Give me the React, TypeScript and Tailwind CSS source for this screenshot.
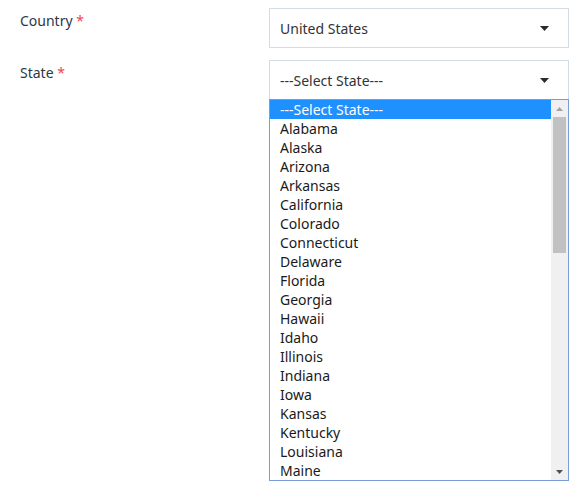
import React from "react";

const states = [
  "Alabama","Alaska","Arizona","Arkansas","California","Colorado","Connecticut","Delaware","Florida","Georgia","Hawaii","Idaho","Illinois","Indiana","Iowa","Kansas","Kentucky","Louisiana","Maine",
];

function Caret() {
  return (
    <svg width="9" height="5" viewBox="0 0 9 5" className="shrink-0">
      <path d="M0 0 H9 L4.5 5 Z" fill="#2b2b2b" />
    </svg>
  );
}

export default function App() {
  return (
    <div className="w-[572px] h-[493px] bg-white relative text-[14px] font-['Noto_Sans','Open_Sans',sans-serif] text-[#2a3440]">
      <div className="flex flex-col pt-[8px] gap-[12px]">
        <div className="flex">
          <div className="w-[269px] pl-[20px] pt-[3px] leading-[20px] text-[#2c3847]">
            Country <span className="text-[#f5424f]">*</span>
          </div>
          <div className="w-[300px] h-[40px] border border-[#d5dbe2] flex items-center justify-between pl-[10px] pr-[19px] text-[#333]">
            <span>United States</span>
            <Caret />
          </div>
        </div>
        <div className="flex">
          <div className="w-[269px] pl-[20px] pt-[3px] leading-[20px] text-[#2c3847]">
            State <span className="text-[#f5424f]">*</span>
          </div>
          <div className="relative w-[300px]">
            <div className="h-[40px] border border-[#d5dbe2] flex items-center justify-between pl-[10px] pr-[19px] text-[#333]">
              <span>---Select State---</span>
              <Caret />
            </div>
            <div className="absolute left-0 top-[39px] w-[300px] h-[382px] border border-[#7a9cd9] bg-white flex">
              <div className="flex-1 flex flex-col">
                <div className="h-[19px] leading-[19px] bg-[#1e90ff] text-white pl-[10px]">---Select State---</div>
                {states.map((s) => (
                  <div key={s} className="h-[19px] leading-[19px] pl-[10px] text-[#1a1a1a]">
                    {s}
                  </div>
                ))}
              </div>
              <div className="w-[17px] bg-[#f0f0f0] flex flex-col items-center">
                <div className="h-[17px] flex items-center justify-center">
                  <svg width="7" height="4" viewBox="0 0 7 4">
                    <path d="M0 4 L3.5 0 L7 4 Z" fill="#a3a3a3" />
                  </svg>
                </div>
                <div className="w-[13px] h-[136px] bg-[#c1c1c1]" />
                <div className="flex-1" />
                <div className="h-[17px] flex items-center justify-center">
                  <svg width="7" height="4" viewBox="0 0 7 4">
                    <path d="M0 0 L7 0 L3.5 4 Z" fill="#505050" />
                  </svg>
                </div>
              </div>
            </div>
          </div>
        </div>
      </div>
    </div>
  );
}
